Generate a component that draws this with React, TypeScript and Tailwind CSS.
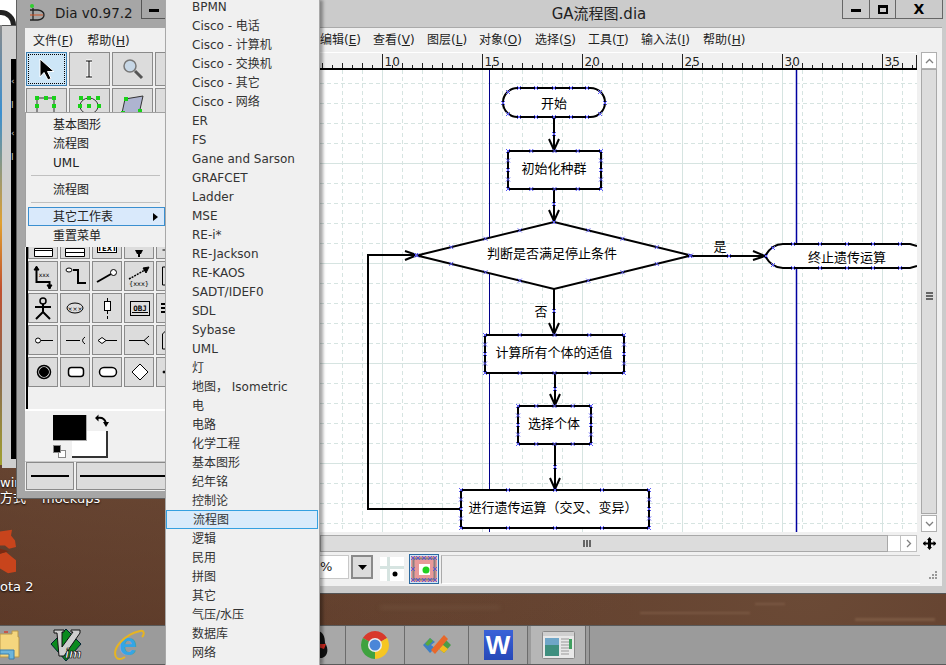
import React from 'react';

const uiFont = "font-['DejaVu_Sans','Noto_Sans_CJK_SC',sans-serif]";

const sheets = [
  'BPMN', 'Cisco - 电话', 'Cisco - 计算机', 'Cisco - 交换机', 'Cisco - 其它', 'Cisco - 网络', 'ER', 'FS',
  'Gane and Sarson', 'GRAFCET', 'Ladder', 'MSE', 'RE-i*', 'RE-Jackson', 'RE-KAOS', 'SADT/IDEF0', 'SDL', 'Sybase',
  'UML', '灯', '地图， Isometric', '电', '电路', '化学工程', '基本图形', '纪年铭', '控制论', '流程图', '逻辑', '民用',
  '拼图', '其它', '气压/水压', '数据库', '网络',
];

const menuBar = [
  ['编辑', 'E', 'w-[53px]'], ['查看', 'V', 'w-[54px]'], ['图层', 'L', 'w-[52px]'], ['对象', 'O', 'w-[56px]'],
  ['选择', 'S', 'w-[53px]'], ['工具', 'T', 'w-[53px]'], ['输入法', 'I', 'w-[62px]'], ['帮助', 'H', 'w-[50px]'],
];

const range = (from: number, to: number, step: number) => {
  const out: number[] = [];
  for (let v = from; v <= to; v += step) out.push(v);
  return out;
};

const cross = (pts: number[][]) => pts.map(([x, y]) => `M${x - 2} ${y - 2}l4 4m0 -4l-4 4`).join('');

const rectPts = (x1: number, y1: number, x2: number, y2: number) => {
  const pts: number[][] = [];
  [0, 0.25, 0.5, 0.75, 1].forEach((t) => {
    const x = x1 + (x2 - x1) * t;
    const y = y1 + (y2 - y1) * t;
    pts.push([x, y1], [x, y2], [x1, y], [x2, y]);
  });
  return pts;
};

const diamondPts = () => {
  const pts: number[][] = [];
  [0, 0.25, 0.5, 0.75].forEach((t) => {
    const dx = 137 * t;
    const dy = 33.5 * t;
    pts.push([554 - dx, 222 + dy], [554 + dx, 222 + dy], [417 + dx, 255.5 + dy], [691 - dx, 255.5 + dy]);
  });
  return pts;
};

const connectionPoints = [
  [519, 88], [536, 88], [554, 88], [571, 88], [587, 88], [519, 117], [536, 117], [554, 117], [571, 117], [587, 117],
  [503, 103], [605, 103], [508, 92], [600, 92], [508, 114], [600, 114], [554, 134], [554, 204], [554, 311], [555, 389], [555, 467],
  [729, 256], [690, 256], [773, 248], [773, 265], [766, 256], [793, 244], [820, 244], [847, 244], [873, 244], [900, 244],
  [793, 268], [820, 268], [847, 268], [873, 268], [900, 268], [416, 255],
  ...rectPts(508, 151, 601, 189),
  ...rectPts(485, 335, 624, 373),
  ...rectPts(518, 406, 591, 444),
  ...rectPts(461, 490, 649, 528),
  ...diamondPts(),
];

const Arrow = ({ x, y1, y2 }: { x: number; y1: number; y2: number }) => (
  <path d={`M${x} ${y1}V${y2}M${x - 5} ${y2 - 11}L${x} ${y2}L${x + 5} ${y2 - 11}`} fill="none" stroke="#000" strokeWidth="2" />
);

const Canvas = () => (
  <svg width="597" height="462" viewBox="320 70 597 462" className="block bg-white">
    {range(342.5, 917, 20).map((x) => (
      <line key={x} x1={x} x2={x} y1="70" y2="532" stroke="#d6e4e1" strokeDasharray="4 3" />
    ))}
    {range(83.5, 532, 20).map((y) => (
      <line key={y} x1="320" x2="917" y1={y} y2={y} stroke="#d6e4e1" strokeDasharray="4 3" />
    ))}
    {range(382.5, 917, 100).map((x) => (
      <line key={x} x1={x} x2={x} y1="70" y2="532" stroke="#d6e4e1" />
    ))}
    {range(163.5, 532, 100).map((y) => (
      <line key={y} x1="320" x2="917" y1={y} y2={y} stroke="#d6e4e1" />
    ))}
    <line x1="489.5" x2="489.5" y1="70" y2="532" stroke="#00008b" />
    <line x1="796.5" x2="796.5" y1="70" y2="532" stroke="#0000a0" strokeWidth="1.5" />

    <g fill="#fff" stroke="#000" strokeWidth="2">
      <rect x="503" y="88" width="102" height="29" rx="14.5" />
      <rect x="508" y="151" width="93" height="38" />
      <polygon points="554,222 691,255.5 554,289 417,255.5" />
      <path d="M917 246L910 244H783Q772 244 765 256Q772 268 783 268H910L917 266" />
      <rect x="485" y="335" width="139" height="38" />
      <rect x="518" y="406" width="73" height="38" />
      <rect x="461" y="490" width="188" height="38" />
    </g>
    <Arrow x={554} y1={117} y2={150} />
    <Arrow x={554} y1={189} y2={221} />
    <Arrow x={554} y1={289} y2={334} />
    <Arrow x={555} y1={373} y2={405} />
    <Arrow x={555} y1={444} y2={489} />
    <path d="M691 256H764M753 251L765 256L753 260" fill="none" stroke="#000" strokeWidth="2" />
    <path d="M461 509H368V255H415M405 251L417 255L405 260" fill="none" stroke="#000" strokeWidth="2" />
    <path d={cross(connectionPoints)} fill="none" stroke="#5a5af5" strokeWidth="1" />

    <g fontFamily="'Noto Sans CJK SC', sans-serif" fontSize="13" fill="#000" textAnchor="middle">
      <text x="554" y="108">开始</text>
      <text x="554" y="173">初始化种群</text>
      <text x="552" y="258">判断是否满足停止条件</text>
      <text x="720" y="251">是</text>
      <text x="847" y="262">终止遗传运算</text>
      <text x="541" y="316">否</text>
      <text x="554" y="357">计算所有个体的适值</text>
      <text x="554" y="428">选择个体</text>
      <text x="553" y="512">进行遗传运算（交叉、变异）</text>
    </g>
  </svg>
);

const Ruler = () => (
  <svg width="597" height="18" viewBox="320 52 597 18" className="block bg-[#f0f0f0]">
    <rect x="320" y="52" width="597" height="1" fill="#fff" />
    {range(322.5, 917, 10).map((x, i) => (
      <line key={x} x1={x} x2={x} y1="68" y2={i % 2 === 0 ? 63 : 65} stroke="#222" />
    ))}
    {range(382.5, 917, 100).map((x, i) => (
      <g key={x}>
        <line x1={x} x2={x} y1="68" y2="54" stroke="#222" />
        <text x={x + 2} y="66" fontSize="12" fill="#222" fontFamily="'DejaVu Sans', sans-serif">{10 + i * 5}</text>
      </g>
    ))}
    <line x1="916.5" x2="916.5" y1="55" y2="68" stroke="#222" />
    <rect x="320" y="68" width="597" height="2" fill="#000" />
  </svg>
);

const ToolBtn = ({ selected, children }: { selected?: boolean; children?: React.ReactNode }) => (
  <div className={`relative h-[34px] w-[41px] shrink-0 border ${selected ? 'border-[#3c7fb1] bg-[#cde6f7]' : 'border-[#8a8a8a] bg-[#dcdcdc]'}`}>
    {selected && <div className="absolute inset-[1px] border border-dotted border-black" />}
    <svg width="39" height="32" viewBox="0 0 39 32" className="relative block">{children}</svg>
  </div>
);

const Sheet = ({ children }: { children?: React.ReactNode }) => (
  <div className="h-[30px] w-[30px] shrink-0 border border-[#8a8a8a] bg-[#dcdcdc]">
    <svg width="28" height="28" viewBox="0 0 28 28" className="block" fill="none" stroke="#000" strokeWidth="1">{children}</svg>
  </div>
);

const sheetRows: React.ReactNode[][] = [
  [
    <path key="a" d="M5.5 18.5h18v8h-18zM5.5 20.5h18" fill="#fff" />,
    <path key="b" d="M4.5 18.5h19v8h-19zM4.5 22.5h19" fill="#fff" />,
    <g key="c"><rect x="4.5" y="13.5" width="19" height="9" fill="#fff" /><text x="14" y="21" fontSize="7" fill="#000" stroke="none" textAnchor="middle" fontFamily="'DejaVu Sans'" fontWeight="bold">TEXT</text></g>,
    <path key="d" d="M10 20h8l-2 4h-1v3h-2v-3h-1z" fill="#000" stroke="none" />,
    <path key="e" d="M5.5 20h20" />,
  ],
  [
    <g key="a"><path d="M7.5 6v14h13v7" strokeWidth="2" /><path d="M5 8l2.5-4l2.5 4zM18 23h5l-2.5 4z" fill="#000" /><text x="15" y="15" fontSize="6" fill="#000" stroke="none" textAnchor="middle" fontFamily="'DejaVu Sans'">xxx</text></g>,
    <g key="b"><path d="M12 8h5v13h8" strokeWidth="2" /><ellipse cx="8" cy="8" rx="3" ry="2" fill="#fff" /></g>,
    <g key="c"><path d="M4 20l14-8" strokeWidth="2" /><circle cx="20.5" cy="10.5" r="3" fill="#fff" /></g>,
    <g key="d"><path d="M4 17l16-9" strokeDasharray="2 1" strokeWidth="1.5" /><path d="M18 6l6-1l-3 6z" fill="#000" /><text x="14" y="24" fontSize="6.5" fill="#000" stroke="none" textAnchor="middle" fontFamily="'DejaVu Sans'">{'{xxx}'}</text></g>,
    <path key="e" d="M5.5 5h10v18h-10z" />,
  ],
  [
    <g key="a" strokeWidth="1.5"><circle cx="14" cy="7" r="3" /><path d="M14 10v8M6 13h16M14 18l-7 7M14 18l7 7" strokeWidth="2" /></g>,
    <g key="b"><ellipse cx="14" cy="14" rx="8" ry="5" /><text x="14" y="16.5" fontSize="6" fill="#000" stroke="none" textAnchor="middle" fontFamily="'DejaVu Sans'">×××</text></g>,
    <g key="c"><path d="M14.5 4v3M14.5 17v3M14.5 22v3" /><rect x="11.5" y="7.5" width="6" height="9" fill="#fff" /></g>,
    <g key="d"><rect x="5.5" y="7.5" width="19" height="14" /><text x="15" y="16.5" fontSize="7.5" fill="#000" stroke="none" textAnchor="middle" fontFamily="'DejaVu Sans Mono'" fontWeight="bold">OBJ</text><path d="M7 18.5h16" /></g>,
    <path key="e" d="M4 10h5M4 14h8M4 18h5" strokeWidth="2" />,
  ],
  [
    <g key="a"><circle cx="9" cy="14.5" r="2.5" fill="#fff" /><path d="M12 14.5h12" /></g>,
    <g key="b"><path d="M5 14.5h14M24 11q-5 3.5 0 7" /></g>,
    <g key="c"><path d="M5 14.5l4-3l4 3l-4 3zM13 14.5h11" fill="#fff" /></g>,
    <g key="d"><path d="M4 14.5h16M24 10l-5 4.5l5 4.5" /></g>,
    <path key="e" d="M5.5 8l3-3h6v18h-9z" />,
  ],
  [
    <g key="a"><circle cx="15" cy="14" r="6.5" strokeWidth="1.5" /><circle cx="15" cy="14" r="4.5" fill="#000" /></g>,
    <rect key="b" x="7.5" y="9.5" width="15" height="9" rx="3" fill="#fff" strokeWidth="1.5" />,
    <rect key="c" x="6.5" y="9.5" width="17" height="9" rx="4.5" fill="#fff" strokeWidth="1.5" />,
    <path key="d" d="M15 6l8 8l-8 8l-8-8z" fill="#fff" />,
    <circle key="e" cx="7" cy="14" r="1" fill="#000" />,
  ],
];

const Toolbox = () => (
  <div className="absolute left-[16px] top-0 flex h-[499px] w-[150px] flex-col border-b border-l border-[#606060] bg-[#a6a6a6]">
    <div className="flex h-[28px] shrink-0 items-start">
      <svg width="20" height="22" viewBox="0 0 20 22" className="ml-[10px] mt-[2px] shrink-0">
        <path d="M6 6v12M3 8h8q6 1 6 5t-6 5H3" fill="none" stroke="#222" strokeWidth="1.3" />
        <path d="M3 13h13" stroke="#d05020" />
        <circle cx="5" cy="4" r="2" fill="#2fd02f" />
      </svg>
      <span className="ml-[8px] mt-[3px] w-[86px] text-[13.5px] leading-[20px] text-[#1a1a1a]">Dia v0.97.2</span>
      <div className="flex h-[19px] w-[24px] shrink-0 items-center justify-center border-b border-l border-[#555] pt-[2px]">
        <div className="h-[3px] w-[10px] bg-black" />
      </div>
    </div>
    <div className="ml-[8px] flex h-[463px] shrink-0 flex-col overflow-hidden bg-[#f0f0f0]">
      <div className="flex h-[24px] shrink-0 items-center gap-[14px] pl-[8px] pt-[1px] text-[12px] text-[#222]">
        <span>文件(<u>F</u>)</span>
        <span>帮助(<u>H</u>)</span>
      </div>
      <div className="flex flex-col gap-[2px] pl-[1px]">
        <div className="flex gap-[2px]">
          <ToolBtn selected>
            <path d="M13 6V24L17 19.5L21 27L24 25.5L20.5 18.5H27Z" fill="#000" stroke="#fff" />
          </ToolBtn>
          <ToolBtn>
            <path d="M16 8h6M19 8v16M16 24h6" stroke="#fff" strokeWidth="3" />
            <path d="M16 8h6M19 8v16M16 24h6" stroke="#000" />
          </ToolBtn>
          <ToolBtn>
            <path d="M22 18l7 7" stroke="#555" strokeWidth="3" />
            <circle cx="17" cy="13" r="6" fill="#c7d7e6" stroke="#777" strokeWidth="1.5" />
          </ToolBtn>
          <ToolBtn />
        </div>
        <div className="flex gap-[2px]">
          <ToolBtn>
            <rect x="10" y="9" width="17" height="16" fill="none" stroke="#333" />
            <path d="M8 7h4v4H8zM17 7h4v4h-4zM25 7h4v4h-4zM8 15h4v4H8zM25 15h4v4h-4z" fill="#19d219" />
          </ToolBtn>
          <ToolBtn>
            <ellipse cx="19" cy="17" rx="9" ry="8" fill="none" stroke="#333" />
            <path d="M9 7h4v4H9zM17 7h4v4h-4zM26 7h4v4h-4zM8 15h4v4H8zM17 15h4v4h-4zM27 15h4v4h-4z" fill="#19d219" />
          </ToolBtn>
          <ToolBtn>
            <path d="M12 10l18-3l-4 18l-17-1z" fill="#aeb4d0" stroke="#333" />
            <path d="M11 8h4v4h-4zM8 22h4v4H8zM25 20h4v4h-4z" fill="#19d219" />
          </ToolBtn>
          <ToolBtn />
        </div>
      </div>
      <div className="ml-[1px] flex h-[287px] shrink-0 flex-col justify-end gap-[2px] border-l-2 border-black">
        {sheetRows.map((row, i) => (
          <div key={i} className="flex gap-[2px]">
            {row.map((icon, j) => <Sheet key={j}>{icon}</Sheet>)}
          </div>
        ))}
        <div className="h-[20px] shrink-0" />
      </div>
      <div className="relative h-[52px] shrink-0 border-t-2 border-white">
        <div className="absolute left-[47px] top-[20px] h-[27px] w-[36px] border-b-2 border-r-2 border-[#333] bg-white" />
        <div className="absolute left-[28px] top-[4px] h-[26px] w-[34px] border-b border-r border-[#aaa] bg-black" />
        <div className="absolute left-[33px] top-[39px] h-[8px] w-[8px] border border-[#888] bg-white" />
        <div className="absolute left-[28px] top-[34px] h-[8px] w-[8px] border border-[#888] bg-black" />
        <svg width="14" height="14" viewBox="0 0 14 14" className="absolute left-[70px] top-[3px]" fill="none" stroke="#000" strokeWidth="2">
          <path d="M3 4q6-1 8 5" />
          <path d="M0 4l3.500-3.500v7zM8 8h6l-3 5z" fill="#000" stroke="none" />
        </svg>
      </div>
      <div className="flex h-[29px] shrink-0 gap-[2px] border-t border-[#c8c8c8] pl-[1px]">
        <div className="flex h-full w-[48px] shrink-0 items-center justify-center border border-[#8a8a8a] bg-[#dcdcdc]">
          <div className="h-[2px] w-[38px] bg-black" />
        </div>
        <div className="flex h-full w-[90px] shrink-0 items-center border border-[#8a8a8a] bg-[#dcdcdc] pl-[3px]">
          <div className="h-[2px] w-full bg-black" />
        </div>
      </div>
    </div>
  </div>
);

const MainWindow = () => (
  <div className="absolute left-[280px] top-0 flex h-[594px] w-[666px] flex-col border-b border-[#555] bg-[#cbcbcb]">
    <div className="relative flex h-[27px] shrink-0 justify-end pr-[3px]">
      <div className="absolute inset-x-0 top-[3px] pr-[28px] text-center text-[15px] leading-[22px] text-[#222]">GA流程图.dia</div>
      <div className="flex h-[19px] border-b border-l border-r border-[#666]">
        <div className="flex w-[27px] items-center justify-center border-r border-[#666] pt-[3px]"><div className="h-[3px] w-[10px] bg-black" /></div>
        <div className="flex w-[26px] items-center justify-center border-r border-[#666]"><div className="h-[9px] w-[10px] border-2 border-t-[3px] border-black" /></div>
        <div className="flex w-[46px] items-center justify-center text-[14px] font-bold leading-none text-black">X</div>
      </div>
    </div>
    <div className="ml-[3px] mr-[4px] flex h-[559px] shrink-0 flex-col border-t border-[#aaa] bg-[#f0f0f0]">
      <div className="flex h-[24px] shrink-0 items-center pl-[37px] text-[12px] text-[#222]">
        {menuBar.map(([label, key, width]) => (
          <span key={label} className={`shrink-0 ${width}`}>{label}(<u>{key}</u>)</span>
        ))}
      </div>
      <div className="flex h-[480px] shrink-0 pl-[37px]">
        <div className="w-[597px] shrink-0">
          <Ruler />
          <Canvas />
        </div>
        <div className="ml-[4px] flex w-[16px] shrink-0 flex-col">
          <div className="flex h-[17px] shrink-0 items-center justify-center border border-[#b0b0b0] bg-white">
            <svg width="9" height="6" viewBox="0 0 9 6" fill="none" stroke="#808080" strokeWidth="1.3"><path d="M1 5l3.5-3.5L8 5" /></svg>
          </div>
          <div className="flex flex-1 flex-col items-center justify-center gap-[1px] border border-[#a8a8a8] bg-[#dcdcdc] pt-[8px]">
            <div className="h-[2px] w-[7px] bg-[#666]" />
            <div className="h-[2px] w-[7px] bg-[#666]" />
            <div className="h-[2px] w-[7px] bg-[#666]" />
          </div>
          <div className="mt-[1px] flex h-[17px] shrink-0 items-center justify-center border border-[#b0b0b0] bg-white">
            <svg width="9" height="6" viewBox="0 0 9 6" fill="none" stroke="#808080" strokeWidth="1.3"><path d="M1 1l3.5 3.5L8 1" /></svg>
          </div>
        </div>
      </div>
      <div className="mt-[3px] flex h-[17px] shrink-0 items-center pl-[37px]">
        <div className="flex h-full w-[568px] shrink-0 items-center gap-[1px] border border-[#a8a8a8] bg-[#dcdcdc] pl-[262px]">
          <div className="h-[7px] w-[2px] bg-[#666]" />
          <div className="h-[7px] w-[2px] bg-[#666]" />
          <div className="h-[7px] w-[2px] bg-[#666]" />
        </div>
        <div className="h-full w-[12px] shrink-0 border-y border-[#c8c8c8] bg-white" />
        <div className="flex h-full w-[17px] shrink-0 items-center justify-center border border-[#c0c0c0] bg-white">
          <svg width="6" height="9" viewBox="0 0 6 9" fill="none" stroke="#808080" strokeWidth="1.3"><path d="M1 1l3.5 3.5L1 8" /></svg>
        </div>
        <svg width="13" height="13" viewBox="0 0 13 13" className="ml-[6px] shrink-0" fill="#000">
          <path d="M6.5 0l2.5 3H8v2.5h2.500V4l3 2.500l-3 2.500V7.500H8V10h1l-2.500 3L4 10h1V7.500H2.500V9l-3-2.500l3-2.500v1.500H5V3H4z" />
        </svg>
      </div>
      <div className="flex h-[34px] shrink-0 items-start pl-[37px] pt-[3px]">
        <div className="flex h-[24px] w-[29px] shrink-0 items-center justify-start border-y border-r border-[#c8c8c8] bg-white text-[13px] text-[#222]">%</div>
        <div className="ml-[2px] flex h-[24px] w-[22px] shrink-0 items-center justify-center border-2 border-[#8a8a8a] bg-[#dcdcdc]">
          <svg width="9" height="5" viewBox="0 0 9 5"><path d="M0 0h9L4.500 5z" fill="#000" /></svg>
        </div>
        <svg width="24" height="24" viewBox="0 0 24 24" className="ml-[7px] mt-[2px] shrink-0">
          <rect width="24" height="24" fill="#fff" />
          <path d="M0 10.500h24M8.500 0v24" stroke="#d6e4e1" strokeWidth="3" />
          <circle cx="15" cy="17" r="2.500" fill="#000" />
        </svg>
        <div className="ml-[5px] -mt-[1px] h-[30px] w-[30px] shrink-0 border border-[#2d6aa0] bg-[#cde6f7]">
          <svg width="28" height="28" viewBox="0 0 28 28" className="block">
            <rect x="1" y="1" width="26" height="26" fill="#e89a9a" />
            <rect x="3.500" y="3.500" width="21" height="21" fill="none" stroke="#8a8080" strokeWidth="2" />
            <rect x="9" y="9" width="11" height="11" fill="#fff" />
            <circle cx="16" cy="15" r="3.500" fill="#22d022" />
            <path d={cross([[3, 3], [14, 3], [25, 3], [3, 14], [25, 14], [3, 25], [14, 25], [25, 25], [8, 3], [20, 3], [8, 25], [20, 25]])} fill="none" stroke="#4d4de0" strokeWidth="0.8" />
          </svg>
        </div>
        <div className="ml-[2px] h-[29px] w-[479px] shrink-0 border-b border-l border-t border-b-white border-l-[#aaa] border-t-[#c4c4c4] bg-[#eeeeee]" />
        <svg width="10" height="10" viewBox="0 0 10 10" className="ml-[8px] mt-[16px] shrink-0" fill="#999">
          <path d="M7 0h2v2H7zM4 3h2v2H4zM7 3h2v2H7zM1 6h2v2H1zM4 6h2v2H4zM7 6h2v2H7z" />
        </svg>
      </div>
    </div>
  </div>
);

const ToolsMenu = () => (
  <div className="absolute left-[25px] top-[112px] flex h-[135px] w-[140px] flex-col border-l border-t border-[#a0a0a0] bg-[#f0f0f0] pt-[2px] text-[12px] text-[#222]">
    {['基本图形', '流程图', 'UML'].map((t) => (
      <div key={t} className="flex h-[19px] shrink-0 items-center pl-[27px]">{t}</div>
    ))}
    <div className="mx-[5px] mb-[4px] mt-[3px] h-px shrink-0 bg-[#c0c0c0]" />
    <div className="flex h-[19px] shrink-0 items-center pl-[27px]">流程图</div>
    <div className="mx-[5px] mb-[4px] mt-[3px] h-px shrink-0 bg-[#c0c0c0]" />
    <div className="ml-[2px] flex h-[19px] shrink-0 items-center justify-between border border-[#3a8fd0] bg-[#d9e9fb] pl-[24px] pr-[6px]">
      <span>其它工作表</span>
      <svg width="5" height="8" viewBox="0 0 5 8"><path d="M0 0l5 4l-5 4z" fill="#000" /></svg>
    </div>
    <div className="flex h-[19px] shrink-0 items-center pl-[27px]">重置菜单</div>
  </div>
);

const SheetsMenu = () => (
  <div className="absolute left-[165px] top-0 h-[665px] w-[155px] overflow-hidden border-x border-x-[#a8a8a8] bg-[#f0f0f0] text-[12px] text-[#333] shadow-[3px_0_3px_rgba(0,0,0,0.35)]">
    <div className="-mt-[3px] flex flex-col">
      {sheets.map((s, i) => (
        <div
          key={i}
          className={`flex h-[19px] shrink-0 items-center whitespace-nowrap pl-[26px] ${i === 27 ? 'mr-px border border-[#35a0e0] bg-[#d9ebfb] pl-[25px]' : ''}`}
        >
          {s}
        </div>
      ))}
    </div>
  </div>
);

const BehindWindow = () => (
  <>
    <div className="absolute left-0 top-0 h-[30px] w-[16px] overflow-hidden bg-white">
      <div className="absolute -left-[14px] top-[10px] h-[40px] w-[30px] rounded-full border-[5px] border-[#222]" />
    </div>
    <div className="absolute left-0 top-[25px] h-[440px] w-[2px] bg-[linear-gradient(180deg,#8a8a8a,#3a8fd0_20%,#e0a030_45%,#c05030_60%,#8a6a50_80%,#a0a030)]" />
    <div className="absolute left-[2px] top-[25px] flex h-[443px] w-[14px] border-t border-[#555] bg-[#cfcfcf]">
      <div className="ml-[9px] mt-[33px] flex h-[400px] w-[5px] flex-col items-start gap-[12px] bg-black pt-[16px] text-[9px] leading-[12px] text-[#ccc]">
        <span>‹</span><span>I</span><span className="mt-[4px]">‹</span><span>I</span>
      </div>
    </div>
    <div className="absolute left-0 top-[475px] text-[13px] leading-[16px] text-white [text-shadow:0_1px_2px_#000]">wir</div>
    <div className="absolute left-0 top-[490px] text-[13px] leading-[16px] text-white [text-shadow:0_1px_2px_#000]">方式</div>
    <div className="absolute left-[42px] top-[491px] text-[13px] leading-[16px] text-white [text-shadow:0_1px_2px_#000]">mockups</div>
    <svg width="18" height="46" viewBox="0 0 18 56" preserveAspectRatio="none" className="absolute left-0 top-[529px]">
      <path d="M0 3L12 1L11 8L15 14L16 22L9 24L5 20L0 20ZM0 30L6 28L12 34L16 38L16 52L8 54L0 48Z" fill="#c8441c" />
      <path d="M0 24L9 27L6 28L0 30Z" fill="#7a2a12" />
    </svg>
    <div className="absolute left-0 top-[579px] text-[13px] leading-[16px] text-white [text-shadow:0_1px_2px_#000]">ota 2</div>
    <div className="absolute left-[640px] top-[612px] h-[2px] w-[110px] bg-[#7c5a44] blur-[1px]" />
    <div className="absolute left-[755px] top-[603px] h-[2px] w-[30px] bg-[#7c5a44] blur-[1px]" />
    <div className="absolute left-[855px] top-[618px] h-[3px] w-[80px] bg-[#7c5a44] blur-[1px]" />
    <div className="absolute left-[380px] top-[606px] h-[3px] w-[120px] bg-[#6e4e3a] blur-[2px]" />
  </>
);

const Vim = () => (
  <svg width="34" height="34" viewBox="0 0 34 34">
    <path d="M17 1L32 16L17 33L2 16Z" fill="#0a8a1e" stroke="#023" />
    <path d="M5 2H15V4H13V19L24 4H22V2H31V5L15 28H10L8 5H5Z" fill="#cfcfcf" stroke="#111" />
    <text x="16" y="30" fontSize="12" fontWeight="bold" fontStyle="italic" fill="#fff" stroke="#000" strokeWidth="0.7" fontFamily="'DejaVu Sans'">im</text>
  </svg>
);

const IE = () => (
  <svg width="32" height="32" viewBox="0 0 32 32">
    <text x="15" y="26" textAnchor="middle" fontSize="32" fontWeight="bold" fill="#35a5e5" fontFamily="'Liberation Sans'">e</text>
    <path d="M3 28C-1 20 10 6 27 2C31 1 32 5 29 8" fill="none" stroke="#e6b422" strokeWidth="2" />
    <path d="M3 28C5 31 9 30 12 28" fill="none" stroke="#e6b422" strokeWidth="2" />
  </svg>
);

const Chrome = () => (
  <svg width="32" height="32" viewBox="0 0 32 32">
    <path d="M3.880 9A14 14 0 0 1 28.120 9L16 16Z" fill="#d8392b" />
    <path d="M28.120 9A14 14 0 0 1 16 30L16 16Z" fill="#f6c623" />
    <path d="M16 30A14 14 0 0 1 3.880 9L16 16Z" fill="#3fa23f" />
    <circle cx="16" cy="16" r="7" fill="#eee" />
    <circle cx="16" cy="16" r="5.500" fill="#4b86d8" />
  </svg>
);

const Studio = () => (
  <svg width="32" height="24" viewBox="0 0 32 24">
    <path d="M2 12L9 5L14 9L10 12L14 15L9 20Z" fill="#3d7fc4" />
    <path d="M4 11L9 5L12 8L7 13Z" fill="#58a83c" />
    <path d="M30 12L23 5L19 9L22 12L18 16L23 20Z" fill="#4a9c48" />
    <path d="M18 16L23 20L27 16L22 12Z" fill="#f2bb1e" />
    <path d="M10 17L23 2L27 6L14 21Z" fill="#e8682a" />
  </svg>
);

const Wps = () => (
  <div className="flex h-[30px] w-[29px] items-center justify-center bg-[linear-gradient(180deg,#3a62d8,#2648b8)] pb-[1px] font-['Liberation_Sans'] text-[26px] font-bold leading-none text-white">W</div>
);

const Thumb = () => (
  <svg width="33" height="28" viewBox="0 0 33 28">
    <rect x="0.500" y="0.500" width="32" height="27" rx="1" fill="#e8e8e8" stroke="#8a8a8a" />
    <rect x="1" y="1" width="31" height="4" fill="#cfcfcf" />
    <rect x="3" y="7" width="14" height="18" fill="#3f8f7f" />
    <rect x="3" y="7" width="14" height="7" fill="#6fa6c8" />
    <path d="M19 8h8M19 11h8M19 14h8M19 17h8M19 20h8M19 23h8" stroke="#999" />
    <rect x="27" y="8" width="3" height="10" fill="#3f9f5f" />
  </svg>
);

const Folder = () => (
  <svg width="20" height="30" viewBox="0 0 20 30">
    <path d="M0 4h12v-3h6v6h1v20H0Z" fill="#f5d67e" stroke="#b9974a" />
    <path d="M0 20h14v9H9v-5H0Z" fill="#6db5dc" stroke="#3a7fae" />
    <path d="M4 2h4" stroke="#d04030" strokeWidth="1.500" />
  </svg>
);

const Penguin = () => (
  <svg width="26" height="30" viewBox="0 0 26 30">
    <path d="M13 1C7 1 5 7 5 13C1 19 2 26 8 28H18C24 26 25 19 21 13C21 7 19 1 13 1Z" fill="#111" />
    <path d="M8 14H22L20 19L14 17Z" fill="#d02a20" />
  </svg>
);

const TaskBtn = ({ w, plain, active, children }: { w: string; plain?: boolean; active?: boolean; children?: React.ReactNode }) => (
  <div className={`flex h-full shrink-0 items-center justify-center overflow-hidden ${w} ${plain ? '' : 'border-r border-[#6c6c6c]'} ${active ? 'bg-[#b6b6b6]' : plain ? '' : 'bg-[#a8a8a8]'}`}>
    {children}
  </div>
);

const Taskbar = () => (
  <div className="flex h-[40px] shrink-0 border-y border-[#5a5a5a] bg-[#9b9b9b]">
    <TaskBtn w="w-[34px]" plain><div className="-ml-[14px]"><Folder /></div></TaskBtn>
    <TaskBtn w="w-[63px]" plain><Vim /></TaskBtn>
    <TaskBtn w="w-[63px]" plain><IE /></TaskBtn>
    <TaskBtn w="w-[125px]" plain />
    <TaskBtn w="w-[61px]"><div className="ml-[3px]"><Penguin /></div></TaskBtn>
    <TaskBtn w="w-[59px]"><Chrome /></TaskBtn>
    <TaskBtn w="w-[64px]"><Studio /></TaskBtn>
    <TaskBtn w="w-[59px]"><Wps /></TaskBtn>
    <div className="w-[3px] shrink-0" />
    <TaskBtn w="w-[55px]" active><Thumb /></TaskBtn>
    <div className="h-full w-[4px] shrink-0 border-r border-[#6c6c6c]" />
  </div>
);

const App: React.FC = () => (
  <div className={`relative flex h-[665px] w-[946px] flex-col overflow-hidden ${uiFont}`}>
    <div className="flex-1 bg-[radial-gradient(ellipse_at_20%_60%,#6e4c38,transparent_60%),radial-gradient(ellipse_at_85%_95%,#6b4a36,transparent_50%),linear-gradient(100deg,#573524,#5f3c2a_50%,#5a3626)]" />
    <Taskbar />
    <BehindWindow />
    <MainWindow />
    <Toolbox />
    <ToolsMenu />
    <SheetsMenu />
  </div>
);

export default App;
